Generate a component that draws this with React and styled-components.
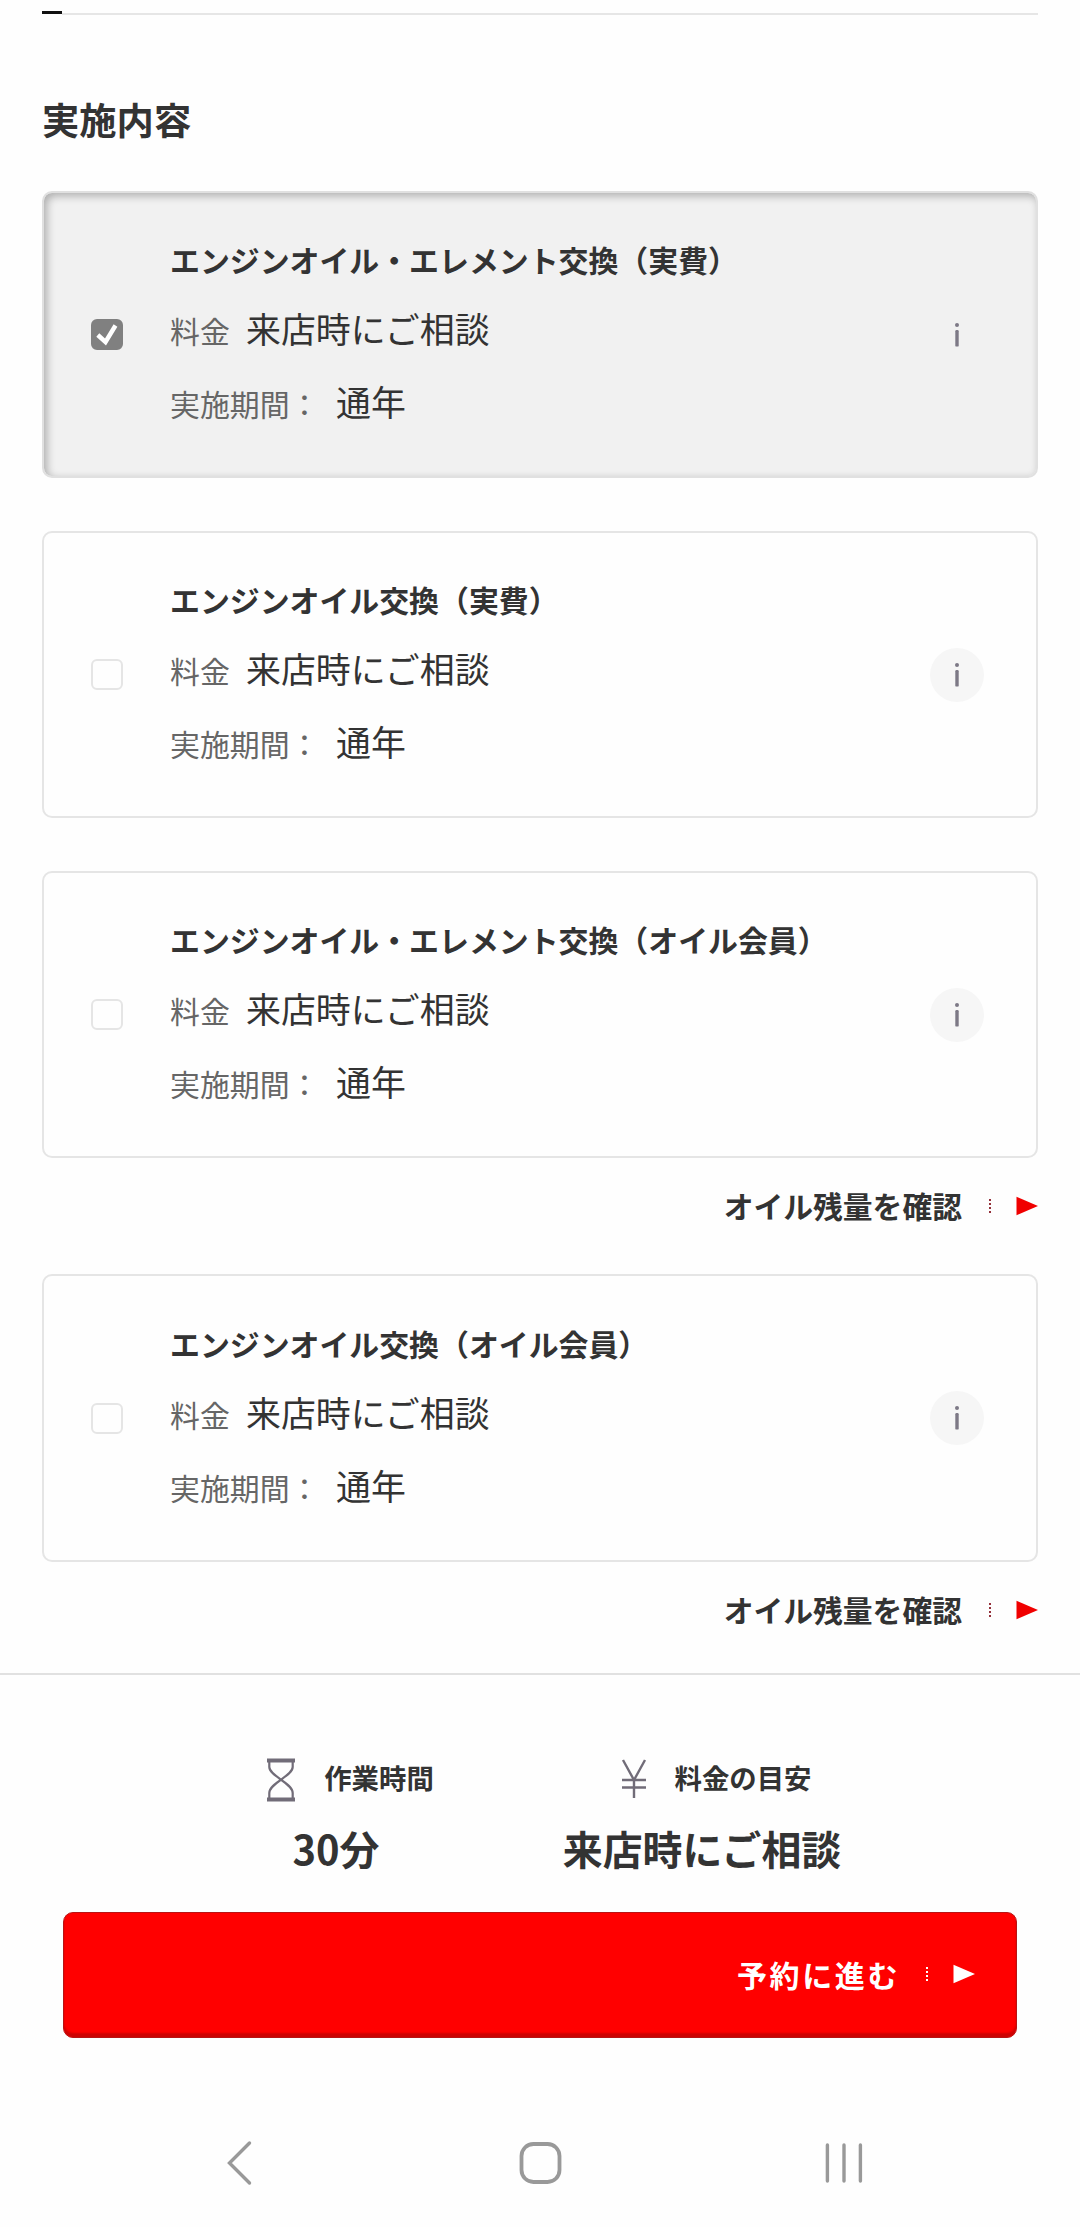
import React, { useState } from "react";
import styled, { createGlobalStyle, css } from "styled-components";

const Global = createGlobalStyle`
  *, *::before, *::after { box-sizing: border-box; }
  body {
    margin: 0;
    background: #fefefe;
    color: #333;
    font-family: "Noto Sans CJK JP", "Noto Sans", sans-serif;
  }
  button { font: inherit; color: inherit; }
  svg { flex: none; }
`;

const Screen = styled.div`
  width: 1080px;
  height: 2227px;
  display: flex;
  flex-direction: column;
  overflow: hidden;
`;

const Main = styled.main`
  height: 1673px;
  padding: 11px 42px 0;
  display: flex;
  flex-direction: column;
`;

const Progress = styled.div`
  height: 4px;
  flex: none;
  display: flex;
  align-items: flex-start;
`;

const ProgressDone = styled.div`
  width: 20px;
  height: 3px;
  background: #111;
`;

const ProgressRest = styled.div`
  flex: 1;
  height: 2px;
  margin-top: 2px;
  background: #e6e6e6;
`;

const Heading = styled.h2`
  margin: 77px 0 0;
  height: 99px;
  font-size: 37.3px;
  line-height: 54px;
  font-weight: 700;
`;

const Card = styled.label`
  flex: none;
  height: ${(p) => p.$height || 287}px;
  margin-top: ${(p) => p.$gap || 0}px;
  padding: 0 51px 0 47px;
  display: grid;
  grid-template-columns: 32px 1fr 55px;
  column-gap: 47px;
  align-items: center;
  border: 2px solid #e5e5e5;
  border-radius: 10px;
  background: #fefefe;
  ${(p) =>
    p.$selected &&
    css`
      background: #f1f1f1;
      border-color: #e0e0e0;
      box-shadow: inset 3px 3px 9px rgba(0, 0, 0, 0.28);
    `}
`;

const HiddenInput = styled.input`
  position: absolute;
  opacity: 0;
  pointer-events: none;
`;

const Box = styled.span`
  width: 32px;
  height: 31px;
  border-radius: 6px;
  display: flex;
  border: 2px solid ${(p) => (p.$on ? "#808080" : "#e5e5e5")};
  background: ${(p) => (p.$on ? "#808080" : "#fefefe")};
`;

const Lines = styled.div`
  display: flex;
  flex-direction: column;
  padding-top: 2px;
`;

const Title = styled.div`
  height: 67px;
  font-size: 29.9px;
  line-height: 60px;
  font-weight: 700;
  white-space: nowrap;
`;

const Line = styled.div`
  height: 73px;
  display: flex;
  align-items: baseline;
  line-height: 64px;
  white-space: nowrap;
`;

const Label = styled.span`
  font-size: 29.9px;
  color: #666;
  width: ${(p) => p.$width}px;
`;

const Value = styled.span`
  font-size: 34.9px;
`;

const InfoButton = styled.button`
  width: 54px;
  height: 54px;
  padding: 0;
  border: 0;
  border-radius: 50%;
  background: ${(p) => (p.$flat ? "transparent" : "#f6f6f6")};
  display: flex;
  align-items: center;
  justify-content: center;
`;

const LinkRow = styled.a`
  flex: none;
  height: ${(p) => p.$height}px;
  display: flex;
  align-items: flex-start;
  justify-content: flex-end;
  font-size: 29.8px;
  line-height: 94px;
  font-weight: 700;
`;

const Arrow = styled.svg`
  flex: none;
  width: 49px;
  height: 20px;
  margin-left: ${(p) => p.$gap}px;
  margin-top: ${(p) => p.$top || 0}px;
`;

const Summary = styled.footer`
  height: 418px;
  border-top: 2px solid #e1e1e1;
  padding: 75px 63px 0;
`;

const Stats = styled.div`
  height: 162px;
  display: flex;
  padding-left: 175px;
`;

const Stat = styled.div`
  flex: none;
  width: ${(p) => p.$width}px;
  margin-right: ${(p) => p.$after || 0}px;
  display: flex;
  flex-direction: column;
  align-items: center;
`;

const StatName = styled.div`
  height: 60px;
  width: 100%;
  padding-left: 28px;
  display: flex;
  align-items: center;
  justify-content: center;
  gap: 28px;
  font-size: 27.4px;
  font-weight: 700;
  line-height: 54px;
  white-space: nowrap;
  span { height: 60px; }
`;

const StatValue = styled.div`
  font-size: 39.9px;
  font-weight: 700;
  line-height: 76px;
  white-space: nowrap;
`;

const Proceed = styled.button`
  width: 954px;
  height: 126px;
  padding: 0 41px 2px 0;
  border: 1px solid #b81414;
  border-radius: 10px;
  background: #f00;
  box-shadow: inset 0 -4px 2px rgba(110, 10, 10, 0.35);
  color: #fff;
  display: flex;
  align-items: center;
  justify-content: flex-end;
  font-size: 30px;
  font-weight: 700;
  letter-spacing: 2.6px;
`;

const NavBar = styled.nav`
  flex: 1;
  padding: 49px 0 0 226px;
  display: flex;
  align-items: flex-start;
`;

const NavIcon = styled.svg`
  width: 44px;
  height: 46px;
  margin-right: ${(p) => p.$after || 0}px;
`;

function ArrowMark({ dots, fill, gap, top }) {
  return (
    <Arrow $gap={gap} $top={top} viewBox="0 0 49 20">
      {[3, 7, 11, 15].map((y) => (
        <rect key={y} x="0" y={y} width="2" height="2" fill={dots} />
      ))}
      <path d="M27.5 0.7L49 10L27.5 19.3Z" fill={fill} />
    </Arrow>
  );
}

function Service({ title, selected, onToggle, gap, height }) {
  return (
    <Card $selected={selected} $gap={gap} $height={height}>
      <Box $on={selected}>
        <HiddenInput type="checkbox" checked={selected} onChange={onToggle} />
        {selected && (
          <svg width="28" height="27" viewBox="0 0 28 27">
            <path
              d="M4.8 14L12.5 21L22.5 4.5"
              fill="none"
              stroke="#fff"
              strokeWidth="4.4"
            />
          </svg>
        )}
      </Box>
      <Lines>
        <Title>{title}</Title>
        <Line>
          <Label $width={76}>料金</Label>
          <Value>来店時にご相談</Value>
        </Line>
        <Line>
          <Label $width={166}>実施期間：</Label>
          <Value>通年</Value>
        </Line>
      </Lines>
      <InfoButton type="button" $flat={selected} aria-label="詳細">
        <svg width="8" height="28" viewBox="0 0 8 28">
          <circle cx="4" cy="4" r="2" fill="#7d7986" />
          <rect x="2.3" y="9" width="3.4" height="16.6" rx="1.2" fill="#7d7986" />
        </svg>
      </InfoButton>
    </Card>
  );
}

const services = [
  { title: "エンジンオイル・エレメント交換（実費）" },
  { title: "エンジンオイル交換（実費）", gap: 53 },
  { title: "エンジンオイル・エレメント交換（オイル会員）", gap: 53, link: 116 },
  { title: "エンジンオイル交換（オイル会員）", height: 288, link: 111 },
];

export default function App() {
  const [picked, setPicked] = useState(0);
  return (
    <>
      <Global />
      <Screen>
        <Main>
          <Progress>
            <ProgressDone />
            <ProgressRest />
          </Progress>
          <Heading>実施内容</Heading>
          {services.map((s, i) => (
            <React.Fragment key={s.title}>
              <Service
                title={s.title}
                gap={s.gap}
                height={s.height}
                selected={picked === i}
                onToggle={() => setPicked(picked === i ? -1 : i)}
              />
              {s.link && (
                <LinkRow $height={s.link}>
                  オイル残量を確認
                  <ArrowMark dots="#94303a" fill="#f00000" gap={27} top={38} />
                </LinkRow>
              )}
            </React.Fragment>
          ))}
        </Main>
        <Summary>
          <Stats>
            <Stat $width={196} $after={128}>
              <StatName>
                <svg width="30" height="44" viewBox="0 0 30 44" fill="none" stroke="#716c78">
                  <path d="M1 2.5H29M1 41.5H29" strokeWidth="4" />
                  <path
                    d="M3.3 4V9C3.3 18 26.7 25 26.7 35V40M26.7 4V9C26.7 18 3.3 25 3.3 35V40"
                    strokeWidth="2.2"
                  />
                </svg>
                <span>作業時間</span>
              </StatName>
              <StatValue>30分</StatValue>
            </Stat>
            <Stat $width={280}>
              <StatName>
                <svg width="26" height="44" viewBox="0 0 26 44" fill="none" stroke="#716c78" strokeWidth="2.4">
                  <path d="M2 2L13 22L24 2M13 22V40M1 22H25M1 29.5H25" />
                </svg>
                <span>料金の目安</span>
              </StatName>
              <StatValue>来店時にご相談</StatValue>
            </Stat>
          </Stats>
          <Proceed type="button">
            予約に進む
            <ArrowMark dots="#fff" fill="#fff" gap={26} />
          </Proceed>
        </Summary>
        <NavBar>
          <NavIcon $after={248} viewBox="0 0 44 46" fill="none" stroke="#999" strokeWidth="3.4">
            <path d="M23.5 3L3.5 23L23.5 43" strokeLinecap="round" />
          </NavIcon>
          <NavIcon $after={260} viewBox="0 0 44 46" fill="none" stroke="#999" strokeWidth="3.8">
            <rect x="3.5" y="4" width="38" height="38" rx="12" />
          </NavIcon>
          <NavIcon viewBox="0 0 44 46" stroke="#999" strokeWidth="3.4" strokeLinecap="round">
            <path d="M5.4 5V41M22 5V41M38.4 5V41" />
          </NavIcon>
        </NavBar>
      </Screen>
    </>
  );
}
